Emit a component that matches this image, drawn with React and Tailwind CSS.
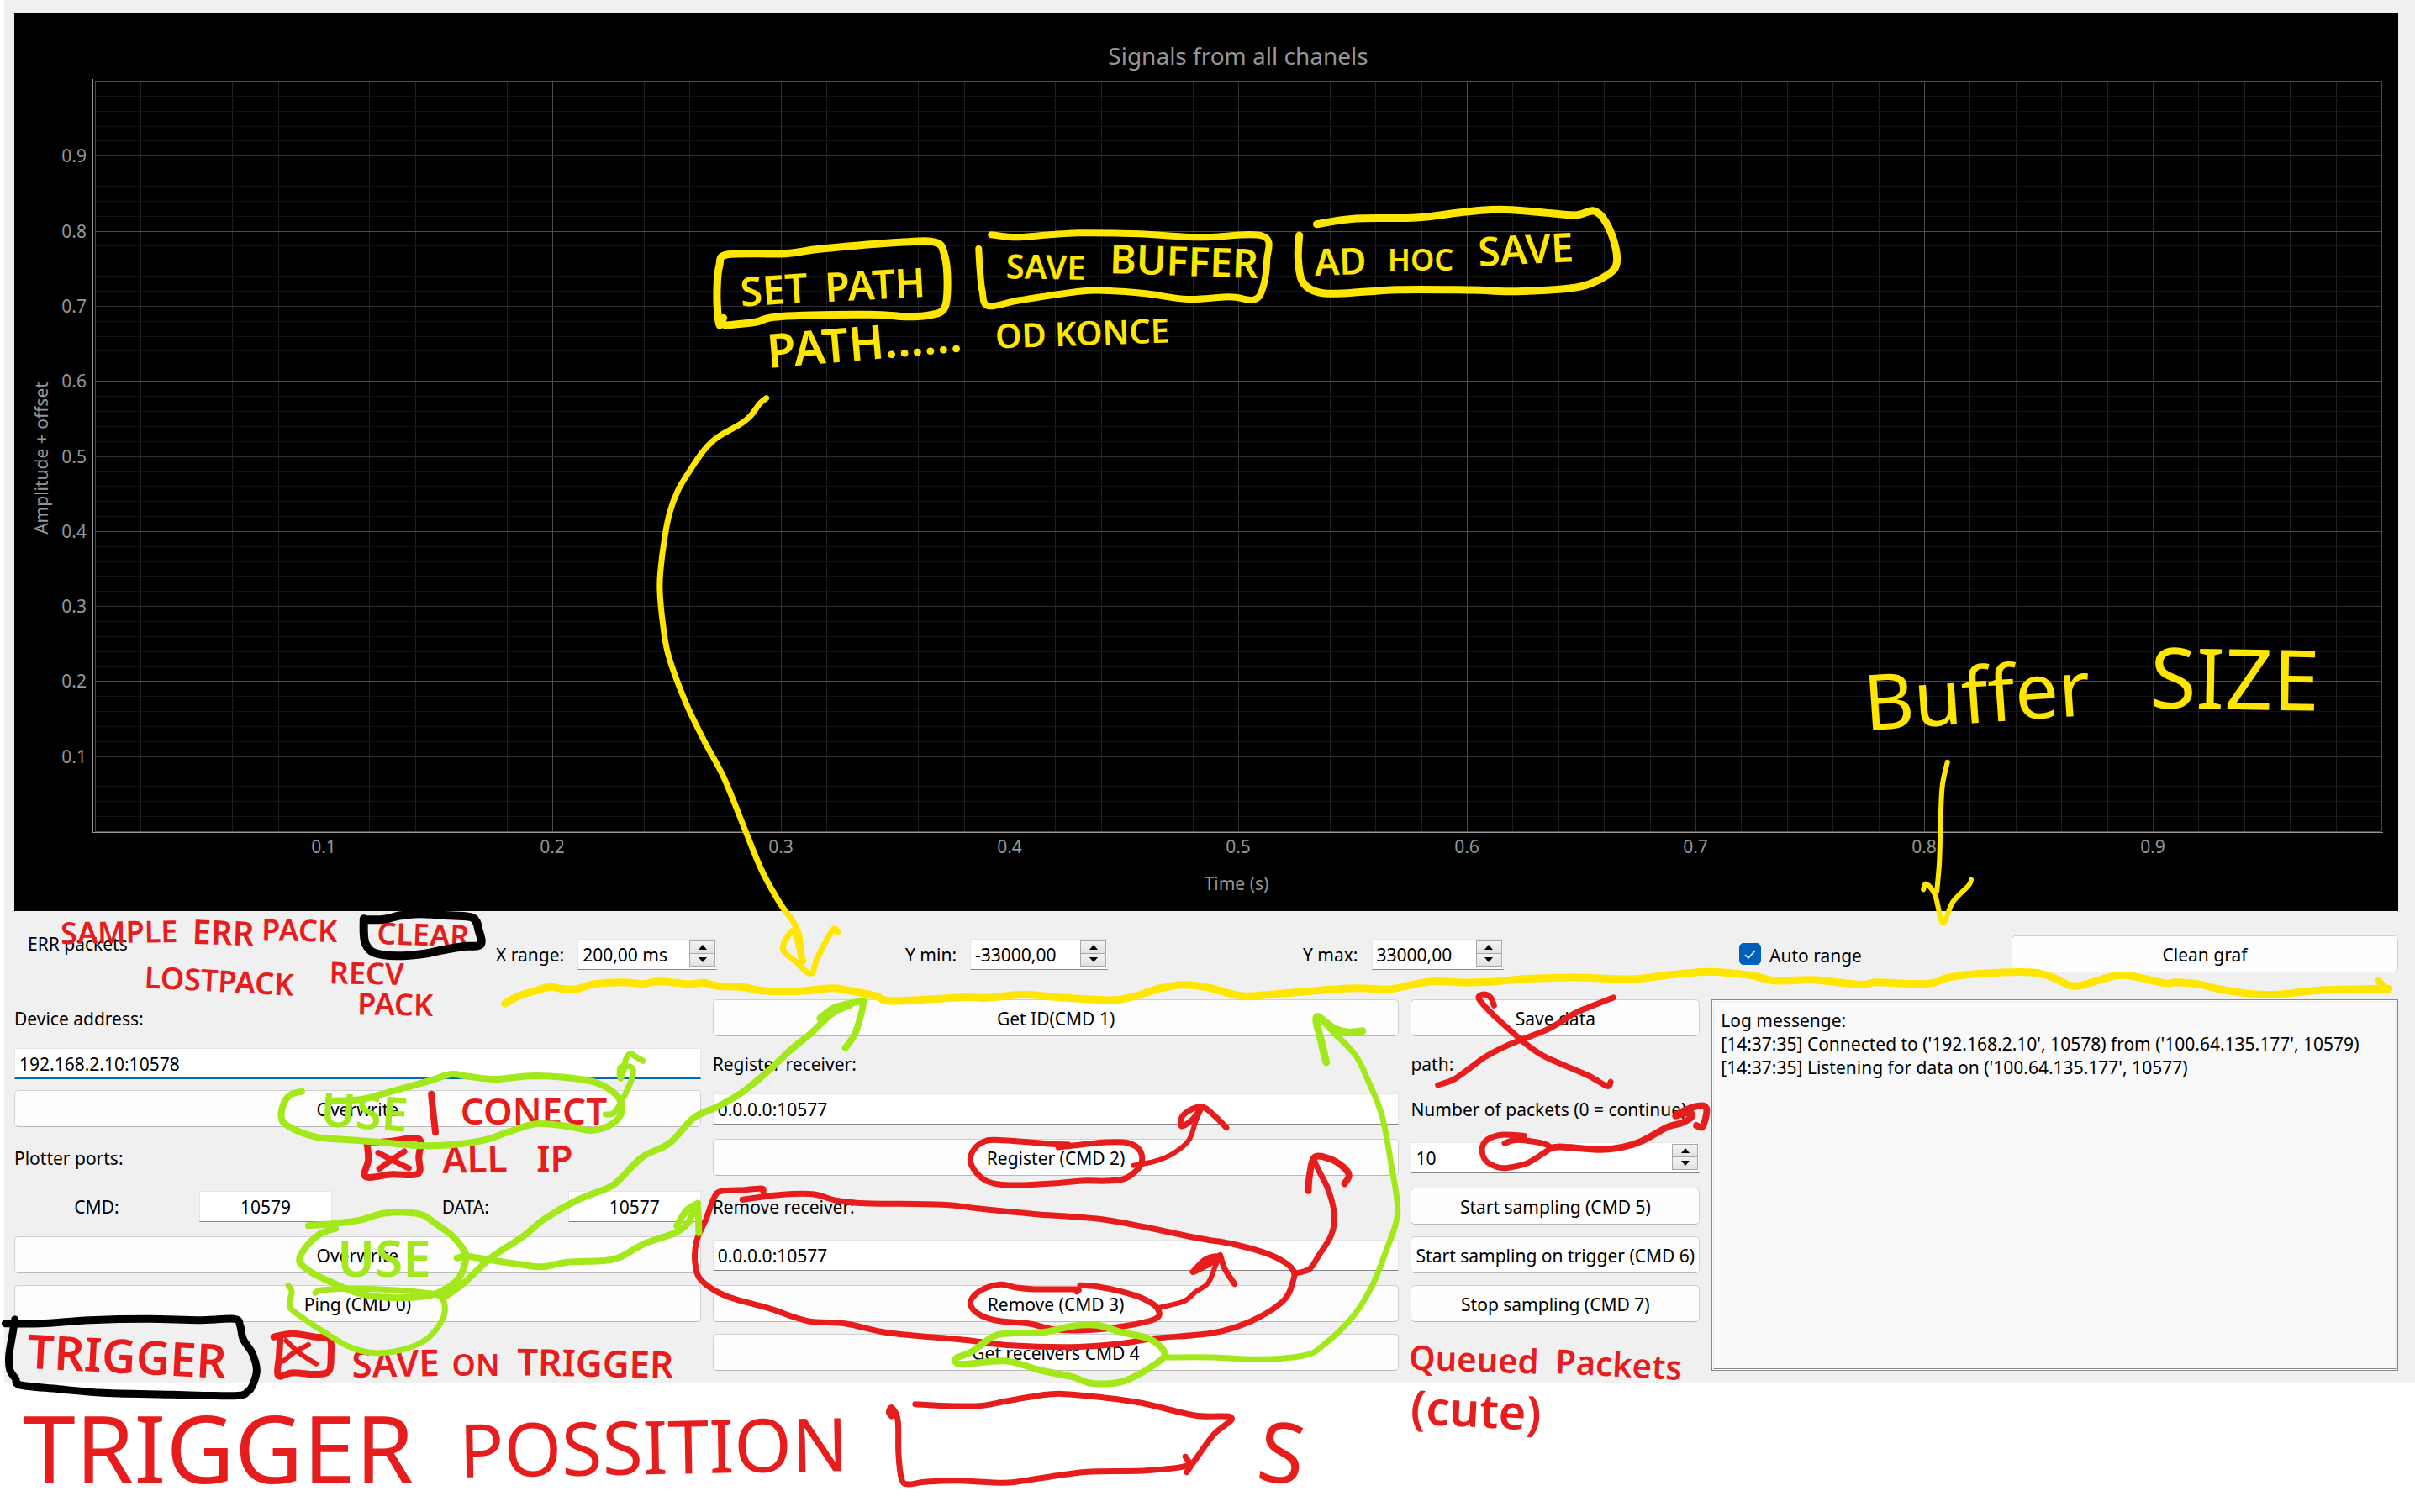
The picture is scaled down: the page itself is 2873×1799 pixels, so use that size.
import React, { useState } from "react";

const YELLOW = "#ffe600";
const GREEN = "#a3e81a";
const RED = "#e71c1c";
const BLACK = "#000000";

/* ---------- Chart ---------- */

const GRID = { left: 96, right: 2816, top: 80, bottom: 973 };

function Chart() {
  const stepX = (GRID.right - GRID.left) / 50;
  const stepY = (GRID.bottom - GRID.top) / 50;
  const steps = Array.from({ length: 51 }, (_, i) => i);
  const ordered = [...steps.filter((i) => i % 5), ...steps.filter((i) => i % 5 === 0)];
  const tone = (i, minor) => (i % 5 ? minor : i % 10 ? "#303030" : "#4c4c4c");
  const ticks = [1, 2, 3, 4, 5, 6, 7, 8, 9];

  return (
    <svg
      viewBox="0 0 2836 1068"
      className="block w-full bg-black font-['Noto_Sans',sans-serif]"
      role="img"
      aria-label="Signals from all chanels"
    >
      <g shapeRendering="crispEdges">
        {ordered.map((i) => {
          const x = Math.round(GRID.left + i * stepX);
          const y = Math.round(GRID.bottom - i * stepY);
          return (
            <g key={i}>
              <rect x={x} y={GRID.top} width="1" height={GRID.bottom - GRID.top} fill={tone(i, "#1f1f1f")} />
              <rect x={GRID.left} y={y} width={GRID.right - GRID.left} height="1" fill={tone(i, "#131313")} />
            </g>
          );
        })}
        <rect x="93" y="78" width="1" height="897" fill="#969696" />
        <rect x="93" y="974" width="2725" height="1" fill="#969696" />
      </g>
      <g fill="#969696" fontSize="21">
        <text x="1456" y="61" fontSize="28" textAnchor="middle">
          Signals from all chanels
        </text>
        {ticks.map((t) => (
          <text key={`x${t}`} x={GRID.left + t * 272} y="999" textAnchor="middle">
            {`0.${t}`}
          </text>
        ))}
        {ticks.map((t) => (
          <text key={`y${t}`} x="86" y={Math.round(GRID.bottom - t * stepY * 5) + 8} textAnchor="end">
            {`0.${t}`}
          </text>
        ))}
        <text x="1454" y="1043" textAnchor="middle">
          Time (s)
        </text>
        <text transform="translate(40 529) rotate(-90)" textAnchor="middle">
          Amplitude + offset
        </text>
      </g>
    </svg>
  );
}

/* ---------- Controls ---------- */

function Button({ children }) {
  return (
    <button
      type="button"
      className="h-[44px] w-full min-w-0 whitespace-nowrap rounded-[5px] border border-[#d0d0d0] border-b-[#b8b8b8] bg-[#fdfdfd] pt-[2px] text-center"
    >
      {children}
    </button>
  );
}

function TextField({ label, value, focused }) {
  return (
    <input
      type="text"
      aria-label={label}
      defaultValue={value}
      className={`h-[37px] min-w-0 border border-[#e6e6e6] bg-white px-[5px] pt-[2px] outline-none ${
        focused ? "border-b-2 border-b-[#0067c0]" : "border-b-[#868686]"
      }`}
    />
  );
}

function Arrow({ down }) {
  return (
    <svg viewBox="0 0 10 6" className="h-[6px] w-[10px]" aria-hidden="true">
      <path d={down ? "M0 0H10L5 6Z" : "M0 6H10L5 0Z"} fill="#000" />
    </svg>
  );
}

function SpinBox({ id, value, className }) {
  const cell = "flex items-center justify-center bg-linear-to-b from-[#f2f2f2] to-[#e2e2e2]";
  return (
    <div className={`flex h-[37px] items-start border border-[#e6e6e6] border-b-[#868686] bg-white ${className}`}>
      <input
        id={id}
        type="text"
        defaultValue={value}
        className="h-[35px] w-0 min-w-0 grow bg-transparent pt-[2px] pl-[5px] outline-none"
      />
      <div className="mt-px mr-px grid h-[31px] w-[31px] grid-rows-2 gap-px border border-[#a8a8a8] bg-[#a8a8a8]">
        <button type="button" aria-label="Increase" className={cell}>
          <Arrow />
        </button>
        <button type="button" aria-label="Decrease" className={cell}>
          <Arrow down />
        </button>
      </div>
    </div>
  );
}

function LabeledSpin({ id, label, value, width }) {
  return (
    <div className="flex min-w-0 items-center gap-4">
      <label htmlFor={id} className="whitespace-nowrap pt-[2px]">
        {label}
      </label>
      <SpinBox id={id} value={value} className={width} />
    </div>
  );
}

function PortField({ label, value }) {
  const id = `port-${label}`;
  return (
    <div className="flex items-center gap-6">
      <label htmlFor={id} className="w-[196px] pt-[2px] text-center">
        {label}:
      </label>
      <input
        id={id}
        type="text"
        defaultValue={value}
        className="h-[37px] w-[158px] border border-[#e6e6e6] border-b-[#868686] bg-white pt-[2px] text-center outline-none"
      />
    </div>
  );
}

function AutoRange() {
  const [on, setOn] = useState(true);
  return (
    <label className="flex items-center gap-[10px]">
      <span className="grid">
        <input
          type="checkbox"
          checked={on}
          onChange={() => setOn(!on)}
          className="col-start-1 row-start-1 size-[26px] appearance-none rounded-[5px] border border-[#8a8a8a] bg-white checked:border-[#005fb8] checked:bg-[#005fb8]"
        />
        {on && (
          <svg
            viewBox="0 0 26 26"
            className="pointer-events-none col-start-1 row-start-1 size-[26px]"
            fill="none"
            stroke="#fff"
            strokeWidth="1.5"
            aria-hidden="true"
          >
            <path d="M7 14 L11 18 L19 9" />
          </svg>
        )}
      </span>
      <span className="pt-[3px]">Auto range</span>
    </label>
  );
}

const LOG = [
  "Log messenge:",
  "[14:37:35] Connected to ('192.168.2.10', 10578) from ('100.64.135.177', 10579)",
  "[14:37:35] Listening for data on ('100.64.135.177', 10577)",
];

/* ---------- Ink layer ---------- */

// Canvas regions the ink was digitised in: origin plus units per pixel.
const region = (ox, oy, sx, sy) => (text) =>
  text.split(" ").map((pair) => {
    const [x, y] = pair.split(",").map(Number);
    return [ox + x / sx, oy + y / sy];
  });

const status = region(0, 1060, 1.8667, 3);
const ports = region(0, 1400, 1.8667, 3);
const range = region(560, 1060, 2.45, 3);
const receivers = region(800, 1160, 1.7422, 3);
const sampling = region(1640, 1080, 3, 2.45);
const log = region(2000, 1080, 1.796, 2.7034);
const saving = region(820, 220, 1.4, 3);
const buffer = region(2180, 740, 2.3758, 3);
const curve = region(740, 440, 3, 3);
const position = region(1000, 1630, 2.6133, 3);
const page = region(0, 0, 1, 1);

// Catmull-Rom spline through the points, written as cubic segments.
function smooth(points) {
  const at = (i) => points[Math.max(0, Math.min(points.length - 1, i))];
  const f = (n) => n.toFixed(1);
  let d = `M${f(points[0][0])} ${f(points[0][1])}`;
  for (let i = 0; i < points.length - 1; i++) {
    const [a, b, c, e] = [at(i - 1), at(i), at(i + 1), at(i + 2)];
    d += `C${f(b[0] + (c[0] - a[0]) / 6)} ${f(b[1] + (c[1] - a[1]) / 6)} ${f(c[0] - (e[0] - b[0]) / 6)} ${f(
      c[1] - (e[1] - b[1]) / 6
    )} ${f(c[0])} ${f(c[1])}`;
  }
  return d;
}

const STROKES = [
  // Clear frame
  [BLACK, 10, status("808,102 850,102 890,88 930,82 1000,88 1050,96 1063,140 1067,192 1030,198 980,212 940,225 880,232 830,220 812,190 808,150 808,100")],
  // Trigger frame
  [BLACK, 9, ports("33,510 28,560 20,640 22,690 35,722 45,744 130,758 230,772 380,778 520,782 550,768 562,740 570,690 560,630 540,580 533,530 520,508 440,512 330,508 200,512 90,524 12,524")],
  // Separator, tick boxes
  [RED, 8, status("958,725 962,790 967,862")],
  [RED, 8, status("815,900 818,960 812,1020 870,1012 928,1010 930,950 930,885 870,893 818,900")],
  [RED, 7, status("840,935 870,960 908,990")],
  [RED, 7, status("898,930 870,960 842,992")],
  [RED, 8, ports("608,572 650,560 700,572 732,580 735,640 730,695 700,705 650,700 618,710 620,640 622,580")],
  [RED, 6, ports("635,585 665,630 702,668")],
  [RED, 6, ports("685,600 655,625 630,658")],
  // Divider
  [YELLOW, 9, [
    ...range("100,402 140,375 185,358 230,343 270,350 310,350 360,332 445,326 500,332 545,323 600,328 640,333 680,328 720,340 790,343 850,356 960,358 1050,347 1100,355 1180,375 1230,393"),
    ...receivers("600,80 650,82 730,70 800,80 910,90 960,75 1010,48 1060,35 1110,45 1180,75 1250,68 1400,48 1480,52"),
    ...sampling("60,235 190,215 300,218 400,216 530,207 700,203 900,208 1050,195 1180,187"),
    ...log("150,218 200,235 280,232 380,247 420,240 525,245 570,225 630,213 750,208 800,228 845,252 940,217 1030,242 1060,240 1110,247 1160,265 1255,280 1370,265 1512,260"),
  ]],
  [YELLOW, 8, log("1490,235 1500,252 1512,262")],
  // Long arrow
  [YELLOW, 7, [
    ...curve("515,101 492,120 460,163 425,192 350,235 320,258 290,290 245,355 200,430 170,510 152,600 137,720 135,790 145,900"),
    ...page("795,779 815,834 838,882 861,925 887,989 905,1033"),
    ...range("880,0 910,60 940,110 958,160 965,240 970,250"),
  ]],
  [YELLOW, 7, range("966,245 945,140 910,205 950,255 992,295 1010,240 1055,140 1070,148")],
  [YELLOW, 8, range("948,150 958,200 966,248")],
  // Framed labels on the chart
  [YELLOW, 9, saving("57,475 50,498 46,400 50,290 65,248 160,245 220,228 350,205 410,205 425,250 430,350 425,440 400,465 360,470 300,463 150,470 110,490 60,501")],
  [YELLOW, 8, saving("482,228 484,300 488,380 498,432 550,412 650,380 700,378 760,388 830,408 900,400 940,410 955,370 962,270 955,182 850,187 750,175 650,172 600,178 545,187 503,178")],
  [YELLOW, 9, saving("1016,180 1014,260 1020,340 1040,378 1080,388 1180,374 1300,375 1380,380 1480,365 1530,320 1545,270 1535,170 1510,95 1475,108 1420,98 1350,88 1290,97 1210,117 1110,120 1045,140")],
  // Buffer size arrow
  [YELLOW, 6, buffer("325,500 310,590 305,740 302,860 295,960")],
  [YELLOW, 6, buffer("257,955 265,935 290,975 312,1075 340,1000 385,940 392,920")],
  // Position box
  [RED, 7, position("158,165 150,150 160,135 178,180 180,300 190,390 210,408 260,400 360,395 510,403 600,390 700,373 780,363 950,359 1075,342 1072,310")],
  [RED, 7, position("232,122 300,127 430,128 520,110 640,88 720,88 920,115 1100,162 1215,170 1160,230 1100,325 1076,365")],
  // Receiver marks
  [RED, 7, receivers("800,615 850,605 900,597 945,600 970,630 970,680 940,725 900,735 850,735 780,745 700,750 650,735 620,680 622,630 650,592 700,592 780,603 820,605")],
  [RED, 6, receivers("955,680 1000,665 1040,635 1070,590 1085,520 1098,470")],
  [RED, 7, receivers("1148,545 1125,505 1098,470 1070,485 1055,510 1055,540 1075,520 1090,490")],
  [RED, 7, receivers("838,1130 835,1122 750,1122 710,1115 680,1105 640,1125 618,1165 630,1205 670,1233 740,1245 790,1265 850,1268 920,1258 1000,1228 1005,1190 975,1155 930,1130 880,1112 845,1108")],
  [RED, 6, receivers("1010,1187 1060,1165 1085,1130 1110,1100 1125,1040 1135,1000")],
  [RED, 7, receivers("1165,1103 1145,1050 1135,1000")],
  [RED, 7, receivers("1078,1060 1105,1015 1130,1005 1115,1030 1080,1060")],
  [RED, 7, receivers("188,775 185,762 150,767 100,772 85,800 70,870 50,950 47,1030 60,1090 110,1145 200,1190 280,1235 360,1245 450,1278 600,1302 700,1322 830,1328 920,1318 1000,1297 1120,1278 1200,1235 1265,1165 1285,1100 1285,1050 1240,1000 1160,960 1090,940 980,900 880,870 760,855 640,835 560,820 400,815 340,805 290,782 220,785 145,802")],
  [RED, 7, receivers("1290,1065 1320,1050 1340,1000 1365,930 1372,860 1360,770 1340,700 1328,655")],
  [RED, 8, receivers("1318,770 1320,720 1330,652 1360,655 1390,685 1402,715 1393,745")],
  // Sampling marks
  [RED, 7, sampling("412,285 400,262 375,252 358,265 400,305 460,350 520,393 580,428 650,455 750,490 815,520 828,508")],
  [RED, 7, sampling("838,262 750,290 700,308 610,352 510,385 450,405 380,435 330,465 270,500 212,517")],
  [RED, 7, sampling("520,665 440,662 390,675 370,700 380,735 420,755 460,758 530,745 590,715 612,700 590,688 520,678 480,678 450,687")],
  [RED, 8, sampling("612,702 650,697 790,705 870,698 940,680 1030,640 1080,628 1115,612 1110,597 1060,607 1100,588 1150,577 1170,585 1168,610 1155,640 1135,635")],
  // Address marks
  [GREEN, 8, status("670,716 645,728 630,760 625,810 640,840 700,878 770,888 850,898 950,910 1060,895 1130,860 1190,832 1260,840 1310,855 1350,840 1378,800 1378,750 1350,705 1300,675 1190,660 1100,672 1040,662 1000,655 950,680 860,720 800,745 730,750")],
  [GREEN, 7, status("1345,798 1365,790 1390,720 1405,660 1403,630 1378,630 1378,670 1385,640 1390,600 1400,580 1410,590 1428,607")],
  // Port marks
  [GREEN, 8, ports("685,175 740,168 800,155 840,135 880,127 935,135 965,165 1000,205 1025,250 1035,290 1020,360 990,400 950,425 870,432 800,418 740,380 690,340 665,300 680,250 710,205 745,185")],
  [GREEN, 8, ports("1015,290 1040,285 1090,298 1150,312 1205,322 1260,305 1340,300 1380,285 1430,240 1500,200 1530,160 1548,98 1552,200")],
  [GREEN, 8, ports("1503,175 1525,120 1550,95")],
  [GREEN, 7, ports("640,388 648,410 643,460 660,490 720,555 780,610 840,630 910,610 955,570 985,500 985,445 965,420 880,405 780,400 715,405 700,415")],
  [GREEN, 8, [
    ...ports("985,432 1030,380 1090,290 1160,215 1210,150 1280,85 1350,40"),
    ...range("430,1035 500,950 580,900 650,810 720,770 790,720 870,640 930,570 990,510 1050,440 1100,405 1145,392"),
  ]],
  [GREEN, 8, range("1145,392 1140,430 1120,510 1092,560")],
  [GREEN, 10, range("1020,455 1060,420 1105,405 1060,428 1030,458")],
  // Get receivers marks
  [GREEN, 8, receivers("590,1365 620,1345 660,1295 690,1280 770,1275 830,1253 880,1250 930,1275 990,1300 1020,1350 1000,1390 935,1450 870,1458 830,1435 760,1410 690,1378 600,1390 585,1373")],
  [GREEN, 7, receivers("1025,1365 1120,1365 1220,1372 1310,1358 1350,1320 1410,1220 1450,1110 1480,980 1503,850 1490,680 1470,500 1440,370 1415,285 1370,205 1340,150")],
  [GREEN, 9, receivers("1355,312 1345,240 1335,150 1370,190 1400,205 1430,200")],
];

// text, centre x, baseline y, font size, colour, tilt in degrees
const NOTES = [
  ["SAMPLE", 142, 1122, 36, RED, -1],
  ["ERR", 265, 1124, 40, RED, 2],
  ["PACK", 356, 1120, 36, RED, 1],
  ["CLEAR", 503, 1125, 36, RED, 2],
  ["LOSTPACK", 260, 1180, 36, RED, 3],
  ["RECV", 436, 1171, 36, RED, 1],
  ["PACK", 470, 1208, 36, RED, 1],
  ["USE", 432, 1343, 56, GREEN, 4],
  ["CONECT", 635, 1338, 44, RED, 0],
  ["ALL", 565, 1395, 44, RED, -1],
  ["IP", 660, 1394, 44, RED, 0],
  ["USE", 457, 1519, 60, GREEN, 0],
  ["TRIGGER", 150, 1634, 56, RED, 3],
  ["SAVE", 471, 1638, 44, RED, -1],
  ["ON", 566, 1637, 36, RED, 0],
  ["TRIGGER", 708, 1638, 44, RED, 1],
  ["TRIGGER", 260, 1765, 112, RED, 0],
  ["POSSITION", 778, 1754, 88, RED, -1],
  ["S", 1520, 1764, 100, RED, 8],
  ["SET", 922, 362, 48, YELLOW, -4],
  ["PATH", 1042, 356, 48, YELLOW, -3],
  ["SAVE", 1244, 332, 40, YELLOW, 1],
  ["BUFFER", 1408, 328, 48, YELLOW, 2],
  ["AD", 1595, 327, 44, YELLOW, -2],
  ["HOC", 1690, 322, 36, YELLOW, 0],
  ["SAVE", 1816, 314, 48, YELLOW, -3],
  ["PATH......", 1030, 428, 56, YELLOW, -5],
  ["OD KONCE", 1288, 411, 40, YELLOW, -2],
  ["Buffer", 2354, 860, 92, YELLOW, -4],
  ["SIZE", 2658, 844, 100, YELLOW, 1],
  ["Queued", 1753, 1632, 40, RED, 2],
  ["Packets", 1925, 1638, 40, RED, 3],
  ["(cute)", 1755, 1698, 56, RED, 3],
];

function Ink() {
  return (
    <svg
      viewBox="0 0 2873 1799"
      className="pointer-events-none absolute inset-x-0 top-0 w-full font-['Noto_Sans',sans-serif]"
      fill="none"
      strokeLinecap="round"
      strokeLinejoin="round"
    >
      {NOTES.map(([text, x, y, size, color, tilt], i) => (
        <text
          key={i}
          transform={`translate(${x} ${y}) rotate(${tilt})`}
          fontSize={size}
          fontWeight={size > 80 ? 400 : 600}
          textAnchor="middle"
          fill={color}
        >
          {text}
        </text>
      ))}
      {STROKES.map(([color, width, points], i) => (
        <path key={i} d={smooth(points)} stroke={color} strokeWidth={width} />
      ))}
    </svg>
  );
}

/* ---------- Page ---------- */

export default function App() {
  return (
    <div className="relative min-h-screen bg-white pl-[5px] font-['Noto_Sans',sans-serif] text-[21px] leading-7 text-black">
      <main className="bg-[#f0f0f0] pt-4 pr-5 pb-[15px] pl-3">
        <Chart />

        <div className="mt-[29px] grid grid-cols-[557fr_487fr_473fr_519fr_324fr_460fr] items-center pl-4">
          <div className="self-start leading-5">ERR packets</div>
          <LabeledSpin id="x-range" label="X range:" value="200,00 ms" width="w-[166px]" />
          <LabeledSpin id="y-min" label="Y min:" value="-33000,00" width="w-[164px]" />
          <LabeledSpin id="y-max" label="Y max:" value="33000,00" width="w-[157px]" />
          <AutoRange />
          <Button>Clean graf</Button>
        </div>

        <div className="mt-8 grid grid-cols-[19fr_19fr_8fr_19fr] gap-[14px]">
          <section className="grid min-w-0 grid-rows-[44px_36px_repeat(6,44px)] items-center gap-[14px]">
            <span className="pt-[2px]">Device address:</span>
            <TextField label="Device address" value="192.168.2.10:10578" focused />
            <Button>Overwrite</Button>
            <span className="pt-[2px]">Plotter ports:</span>
            <div className="flex justify-between">
              <PortField label="CMD" value="10579" />
              <PortField label="DATA" value="10577" />
            </div>
            <Button>Overwrite</Button>
            <Button>Ping (CMD 0)</Button>
          </section>

          <section className="grid min-w-0 grid-rows-[44px_36px_repeat(6,44px)] items-center gap-[14px]">
            <Button>Get ID(CMD 1)</Button>
            <span className="pt-[2px]">Register receiver:</span>
            <TextField label="Register receiver" value="0.0.0.0:10577" />
            <Button>Register (CMD 2)</Button>
            <span className="pt-[2px]">Remove receiver:</span>
            <TextField label="Remove receiver" value="0.0.0.0:10577" />
            <Button>Remove (CMD 3)</Button>
            <Button>Get receivers CMD 4</Button>
          </section>

          <section className="grid min-w-0 grid-rows-[44px_36px_repeat(6,44px)] items-center gap-[14px]">
            <Button>Save data</Button>
            <span className="pt-[2px]">path:</span>
            <label htmlFor="packets" className="whitespace-nowrap pt-[2px]">
              Number of packets (0 = continue)
            </label>
            <SpinBox id="packets" value="10" className="w-full" />
            <Button>Start sampling (CMD 5)</Button>
            <Button>Start sampling on trigger (CMD 6)</Button>
            <Button>Stop sampling (CMD 7)</Button>
          </section>

          <section className="flex min-w-0 border border-[#828790] bg-white p-px">
            <div className="grow border border-[#ececec] border-b-[#868686] bg-[#f9f9f9] px-2 pt-2 whitespace-nowrap">
              {LOG.map((line) => (
                <p key={line}>{line}</p>
              ))}
            </div>
          </section>
        </div>
      </main>
      <Ink />
    </div>
  );
}
